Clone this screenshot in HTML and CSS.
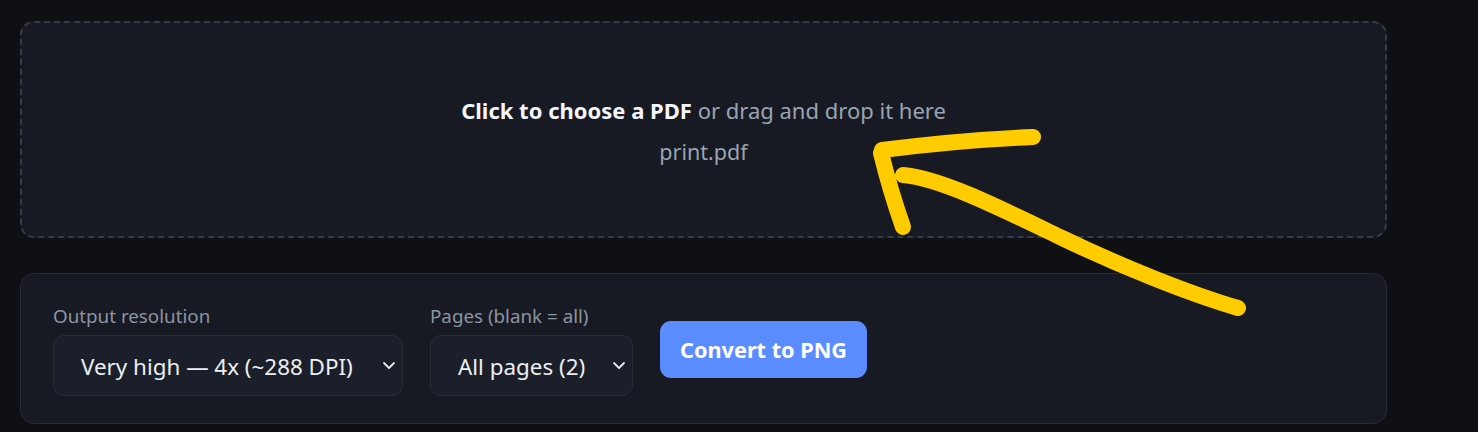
FILE: index.html
```html
<!DOCTYPE html>
<html lang="en">
<head>
<meta charset="utf-8">
<title>PDF to PNG</title>
<link rel="stylesheet" href="styles.css">
</head>
<body>
<main class="page">
  <section class="dropzone">
    <p class="drop-title"><strong>Click to choose a PDF</strong> or drag and drop it here</p>
    <p class="drop-file">print.pdf</p>
  </section>
  <section class="panel">
    <div class="field">
      <span class="label">Output resolution</span>
      <div class="select select-res">
        <span>Very high — 4x (~288 DPI)</span>
        <svg class="chev" viewBox="0 0 14 9" width="14" height="9"><path d="M2 2 L7 7 L12 2" fill="none" stroke="#e6e8ec" stroke-width="1.8" stroke-linecap="round" stroke-linejoin="round"/></svg>
      </div>
    </div>
    <div class="field">
      <span class="label">Pages (blank = all)</span>
      <div class="select select-pages">
        <span>All pages (2)</span>
        <svg class="chev" viewBox="0 0 14 9" width="14" height="9"><path d="M2 2 L7 7 L12 2" fill="none" stroke="#e6e8ec" stroke-width="1.8" stroke-linecap="round" stroke-linejoin="round"/></svg>
      </div>
    </div>
    <button class="convert">Convert to PNG</button>
  </section>
</main>
<svg class="annot" viewBox="0 0 1478 432" width="1478" height="432">
  <g fill="none" stroke="#ffcc00" stroke-width="16" stroke-linecap="round" stroke-linejoin="round">
    <path d="M1033 137 Q 960 140 882 150"/>
    <path d="M881 153 Q 890 190 903 227"/>
    <path d="M903 175 C 940 178, 1000 208, 1060 237 S 1190 294, 1238 308"/>
  </g>
</svg>
</body>
</html>
```

FILE: styles.css
```css
html, body {
  margin: 0;
  padding: 0;
}
body {
  background: #0f1014;
  font-family: "Noto Sans", "Open Sans", sans-serif;
  color: #e8eaee;
  width: 1478px;
  height: 432px;
  overflow: hidden;
  position: relative;
}
.page {
  width: 1367px;
  padding: 21px 0 0 20px;
}
.dropzone {
  box-sizing: border-box;
  height: 217px;
  border: 2px dashed #343b49;
  border-radius: 14px;
  background: #171a23;
  display: flex;
  flex-direction: column;
  align-items: center;
  justify-content: center;
  padding-top: 3px;
}
.drop-title {
  margin: 0;
  font-size: 22px;
  line-height: 28px;
  color: #9aa4b2;
}
.drop-title strong {
  color: #f4f6fa;
  font-weight: 700;
}
.drop-file {
  margin: 14px 0 0;
  font-size: 21.5px;
  line-height: 28px;
  color: #9aa4b2;
}
.panel {
  box-sizing: border-box;
  margin-top: 35px;
  height: 151px;
  border: 1px solid #262b36;
  border-radius: 14px;
  background: #171a22;
  padding: 29px 32px 27px;
  display: flex;
  align-items: center;
  gap: 27px;
}
.field {
  display: flex;
  flex-direction: column;
  gap: 6px;
}
.label {
  font-size: 18.8px;
  line-height: 25px;
  color: #8b95a3;
}
.select {
  box-sizing: border-box;
  height: 61px;
  border: 1px solid #272c37;
  border-radius: 11px;
  background: #1b1f29;
  padding: 2px 6px 0 27px;
  display: flex;
  align-items: center;
  justify-content: space-between;
  font-size: 22.4px;
  color: #eceef2;
}
.select-res {
  width: 350px;
}
.select-pages {
  width: 203px;
}
.chev {
  display: block;
  margin-top: -1px;
}
.convert {
  box-sizing: border-box;
  height: 57px;
  padding: 0 20px;
  border: none;
  border-radius: 11px;
  background: #5b8cff;
  color: #ffffff;
  font-family: "Noto Sans", "Open Sans", sans-serif;
  font-size: 21.7px;
  font-weight: 700;
}
.annot {
  position: absolute;
  left: 0;
  top: 0;
  pointer-events: none;
}
```
